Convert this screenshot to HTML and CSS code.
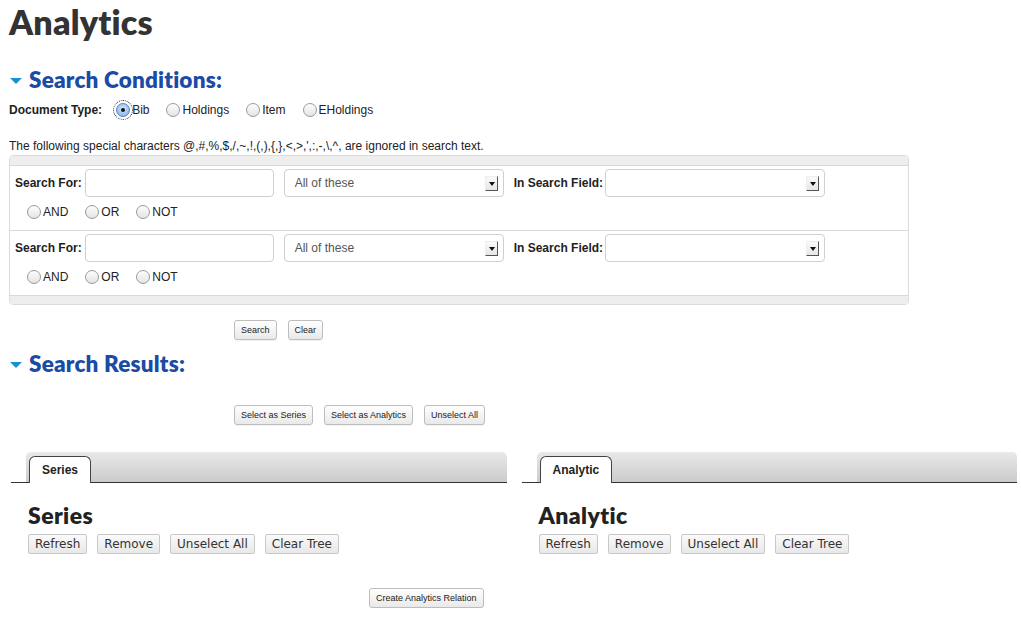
FILE: index.html
```html
<!DOCTYPE html>
<html>
<head>
<meta charset="utf-8">
<link rel="stylesheet" href="styles.css">
</head>
<body>
<h1 class="page-title">Analytics</h1>

<h2 class="section-title"><span class="caret"></span>Search Conditions:</h2>

<div class="doc-type">
  <span class="doc-label">Document Type:</span>
  <label class="opt"><span class="radio checked focus"></span>Bib</label>
  <label class="opt"><span class="radio"></span>Holdings</label>
  <label class="opt"><span class="radio"></span>Item</label>
  <label class="opt"><span class="radio"></span>EHoldings</label>
</div>

<p class="note">The following special characters @,#,%,$,/,~,!,(,),{,},&lt;,&gt;,',:,-,\,^, are ignored in search text.</p>

<div class="panel">
  <div class="panel-band"></div>
  <div class="cond-row">
    <div class="fields">
      <span class="flabel">Search For:</span>
      <div class="textbox"></div>
      <div class="select"><span class="sel-text">All of these</span><span class="sel-arrow"></span></div>
      <span class="flabel field-label">In Search Field:</span>
      <div class="select"><span class="sel-text"></span><span class="sel-arrow"></span></div>
    </div>
    <div class="ops">
      <label class="opt"><span class="radio"></span>AND</label>
      <label class="opt"><span class="radio"></span>OR</label>
      <label class="opt"><span class="radio"></span>NOT</label>
    </div>
  </div>
  <div class="cond-row">
    <div class="fields">
      <span class="flabel">Search For:</span>
      <div class="textbox"></div>
      <div class="select"><span class="sel-text">All of these</span><span class="sel-arrow"></span></div>
      <span class="flabel field-label">In Search Field:</span>
      <div class="select"><span class="sel-text"></span><span class="sel-arrow"></span></div>
    </div>
    <div class="ops">
      <label class="opt"><span class="radio"></span>AND</label>
      <label class="opt"><span class="radio"></span>OR</label>
      <label class="opt"><span class="radio"></span>NOT</label>
    </div>
  </div>
  <div class="panel-band"></div>
</div>

<div class="btn-row search-btns">
  <button class="sbtn">Search</button>
  <button class="sbtn">Clear</button>
</div>

<h2 class="section-title results-title"><span class="caret"></span>Search Results:</h2>

<div class="btn-row select-btns">
  <button class="sbtn">Select as Series</button>
  <button class="sbtn">Select as Analytics</button>
  <button class="sbtn">Unselect All</button>
</div>

<div class="trees">
  <div class="tree-col">
    <div class="tabbar"><div class="tabstrip"><span class="tab">Series</span></div></div>
    <div class="tree-body">
      <h3 class="tree-title">Series</h3>
      <div class="tree-btns">
        <button class="tbtn">Refresh</button>
        <button class="tbtn">Remove</button>
        <button class="tbtn">Unselect All</button>
        <button class="tbtn">Clear Tree</button>
      </div>
    </div>
  </div>
  <div class="tree-col">
    <div class="tabbar"><div class="tabstrip"><span class="tab">Analytic</span></div></div>
    <div class="tree-body">
      <h3 class="tree-title">Analytic</h3>
      <div class="tree-btns">
        <button class="tbtn">Refresh</button>
        <button class="tbtn">Remove</button>
        <button class="tbtn">Unselect All</button>
        <button class="tbtn">Clear Tree</button>
      </div>
    </div>
  </div>
</div>

<div class="create-row">
  <button class="sbtn">Create Analytics Relation</button>
</div>
</body>
</html>
```

FILE: styles.css
```css
* { box-sizing: border-box; }
html, body { margin: 0; padding: 0; background: #fff; }
body {
  padding: 0 4px 0 9px;
  font-family: "Liberation Sans", Arial, sans-serif;
  font-size: 12px;
  color: #222;
  width: 1021px;
}

.page-title {
  font-family: Lato, "Open Sans", sans-serif;
  font-weight: 800;
  font-size: 34px;
  line-height: 44px;
  color: #333;
  margin: 0;
  letter-spacing: 0.2px;
}

.section-title {
  font-family: Lato, "Open Sans", sans-serif;
  font-weight: 800;
  font-size: 22.5px;
  line-height: 26px;
  color: #1a4ba5;
  margin: 23px 0 0 0;
  display: flex;
  align-items: center;
  letter-spacing: 0.2px;
}
.caret {
  display: inline-block;
  width: 0; height: 0;
  border-left: 6px solid transparent;
  border-right: 6px solid transparent;
  border-top: 6px solid #1b90d0;
  margin: 2px 7px 0 1px;
}

.doc-type {
  display: flex;
  align-items: center;
  margin-top: 7px;
  height: 20px;
}
.doc-label { font-weight: bold; margin-right: 14px; }
.doc-type .opt { margin-right: 17px; }

.opt {
  display: inline-flex;
  align-items: center;
  font-size: 12px;
  color: #222;
}
.radio {
  display: inline-block;
  width: 14px; height: 14px;
  border-radius: 50%;
  border: 1px solid #9a9a9a;
  background: linear-gradient(#fdfdfd, #e4e4e4);
  margin-right: 2px;
  position: relative;
}
.radio.checked {
  border-color: #5a7fbf;
  background: radial-gradient(circle at 50% 40%, #d8e9fb 0%, #8fbdf0 70%, #6aa2e2 100%);
}
.radio.checked::after {
  content: "";
  position: absolute;
  width: 4px; height: 4px;
  border-radius: 50%;
  background: #111;
  left: 4px; top: 4px;
}
.radio.focus { outline: 1px dotted #222; outline-offset: 2px; }

.note { margin: 19px 0 0 0; line-height: 14px; font-size: 12px; color: #222; }

.panel {
  margin-top: 2px;
  width: 900px;
  border: 1px solid #dcdcdc;
  border-radius: 4px;
  background: #fff;
  overflow: hidden;
}
.panel-band { height: 9px; background: #eeeeee; }
.cond-row {
  border-top: 1px solid #d8d8d8;
  height: 65px;
  padding: 3px 5px 0 5px;
}
.cond-row + .panel-band { border-top: 1px solid #d8d8d8; }
.fields { display: flex; align-items: center; height: 28px; }
.flabel { font-weight: bold; font-size: 12px; margin-right: 3px; }
.field-label { margin-left: 10px; margin-right: 2px; }
.textbox {
  width: 189px; height: 28px;
  border: 1px solid #cfcfcf;
  border-radius: 4px;
  background: #fff;
  margin-right: 10px;
}
.select {
  width: 220px; height: 28px;
  border: 1px solid #cfcfcf;
  border-radius: 4px;
  background: #fff;
  display: flex;
  align-items: center;
  padding: 0 5px 0 10px;
}
.sel-text { flex: 1; color: #555; font-size: 12px; }
.sel-arrow {
  width: 13px; height: 15px;
  background: linear-gradient(#fafafa, #e6e6e6);
  border-right: 1px solid #555;
  border-bottom: 1px solid #555;
  border-top: 1px solid #eee;
  border-left: 1px solid #eee;
  position: relative;
}
.sel-arrow::after {
  content: "";
  position: absolute;
  left: 3px; top: 5px;
  border-left: 3px solid transparent;
  border-right: 3px solid transparent;
  border-top: 4px solid #111;
}
.ops { display: flex; align-items: center; margin: 7px 0 0 12px; height: 16px; }
.ops .opt { margin-right: 17px; }

.btn-row { display: flex; gap: 11px; padding-left: 225px; }
.search-btns { margin-top: 15px; }
.sbtn {
  font-family: "Liberation Sans", Arial, sans-serif;
  font-size: 9px;
  color: #222;
  height: 20px;
  padding: 0 6px;
  border: 1px solid #bdbdbd;
  border-radius: 3px;
  background: linear-gradient(#ffffff, #e9e9e9);
  box-shadow: 0 1px 0 rgba(0,0,0,0.05);
}
.results-title { margin-top: 11px; }
.select-btns { margin-top: 28px; }

.trees { display: flex; gap: 15px; margin-top: 27px; padding-left: 2px; }
.tree-col { width: 496px; }
.tabbar { border-bottom: 1px solid #333; height: 31px; padding-left: 15px; }
.tabstrip {
  height: 30px;
  background: linear-gradient(#e9e9e9, #cbcbcb);
  border-radius: 5px 5px 0 0;
  padding: 4px 0 0 3px;
}
.tab {
  display: inline-flex;
  align-items: center;
  justify-content: center;
  height: 27px;
  padding: 0 12px;
  background: #fff;
  border: 1px solid #444;
  border-bottom: none;
  border-radius: 6px 6px 0 0;
  font-weight: bold;
  font-size: 12px;
  color: #222;
}
.tree-body { padding-left: 17px; }
.tree-title {
  font-family: Lato, "Open Sans", sans-serif;
  font-weight: 800;
  font-size: 23px;
  line-height: 26px;
  margin: 19px 0 0 0;
  color: #222;
  letter-spacing: 0.4px;
}
.tree-btns { display: flex; gap: 10px; margin-top: 6px; }
.tbtn {
  font-family: "DejaVu Sans", Verdana, sans-serif;
  font-size: 12px;
  color: #333;
  height: 20px;
  padding: 0 6px;
  border: 1px solid #c8c8c8;
  border-radius: 2px;
  background: linear-gradient(#fafafa, #e8e8e8);
}
.create-row { margin-top: 34px; padding-left: 360px; }
```
